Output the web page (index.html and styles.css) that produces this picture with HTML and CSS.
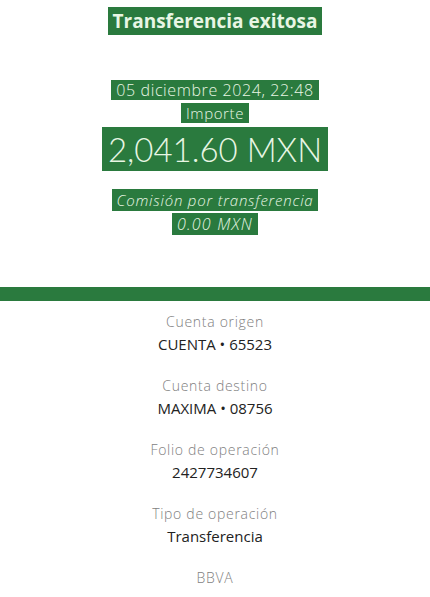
FILE: index.html
```html
<!DOCTYPE html>
<html lang="es">
<head>
  <meta charset="UTF-8" />
  <meta name="viewport" content="width=device-width, initial-scale=1.0"/>
  <title>Transferencia exitosa</title>
  <link rel="stylesheet" href="styles.css">
</head>
<body>
  <div class="header">
    <h1><span>Transferencia exitosa</span></h1>
    <div class="date"><span>05 diciembre 2024, 22:48</span></div>
    <div class="label"><span>Importe</span></div>
    <div class="amount"><span>2,041.60 MXN</span></div>
    <div class="fee"><span>Comisión por transferencia</span></div>
    <div class="fee fee-amount"><span>0.00 MXN</span></div>
  </div>

  <div class="bar"></div>

  <div class="details">
    <div class="row">
      <div class="key">Cuenta origen</div>
      <div class="value">CUENTA • 65523</div>
    </div>
    <div class="row">
      <div class="key">Cuenta destino</div>
      <div class="value">MAXIMA • 08756</div>
    </div>
    <div class="row">
      <div class="key">Folio de operación</div>
      <div class="value">2427734607</div>
    </div>
    <div class="row">
      <div class="key">Tipo de operación</div>
      <div class="value">Transferencia</div>
    </div>
    <div class="bank">BBVA</div>
  </div>
</body>
</html>
```

FILE: styles.css
```css
body {
  margin: 0;
  font-family: 'Open Sans', 'Noto Sans', sans-serif;
  background: white;
  text-align: center;
}
.header span {
  display: inline-block;
  background: #2a7a3e;
  color: #e8f6e4;
  padding: 0 5px;
}
h1 {
  margin: 0;
  padding-top: 7px;
  font-size: 19px;
  font-weight: 700;
  line-height: 28px;
}
.date {
  margin-top: 45px;
  font-size: 16px;
  font-weight: 300;
  letter-spacing: 0.6px;
  line-height: 20px;
}
.label {
  margin-top: 3px;
  font-size: 15px;
  font-weight: 300;
  letter-spacing: 0.6px;
  line-height: 20px;
}
.amount {
  margin-top: 4px;
  font-family: Lato, 'Open Sans', sans-serif;
  font-size: 33px;
  font-weight: 300;
  line-height: 44px;
}
.amount span {
  padding: 0 6px;
}
.fee {
  font-size: 15px;
  font-style: italic;
  font-weight: 300;
  letter-spacing: 0.8px;
  line-height: 22px;
}
.amount + .fee {
  margin-top: 18px;
}
.fee-amount {
  margin-top: 2px;
  font-size: 16px;
  letter-spacing: 1.2px;
}
.bar {
  margin-top: 52px;
  height: 14px;
  background: #2a7a3e;
}
.details {
  padding-top: 9px;
}
.row {
  margin-bottom: 18px;
}
.key {
  font-size: 14px;
  font-weight: 300;
  letter-spacing: 0.7px;
  color: #7e7e7e;
  line-height: 23px;
}
.value {
  font-size: 15px;
  color: #222;
  line-height: 23px;
}
.bank {
  font-size: 14px;
  font-weight: 300;
  letter-spacing: 0.7px;
  color: #7e7e7e;
  line-height: 23px;
}
```
